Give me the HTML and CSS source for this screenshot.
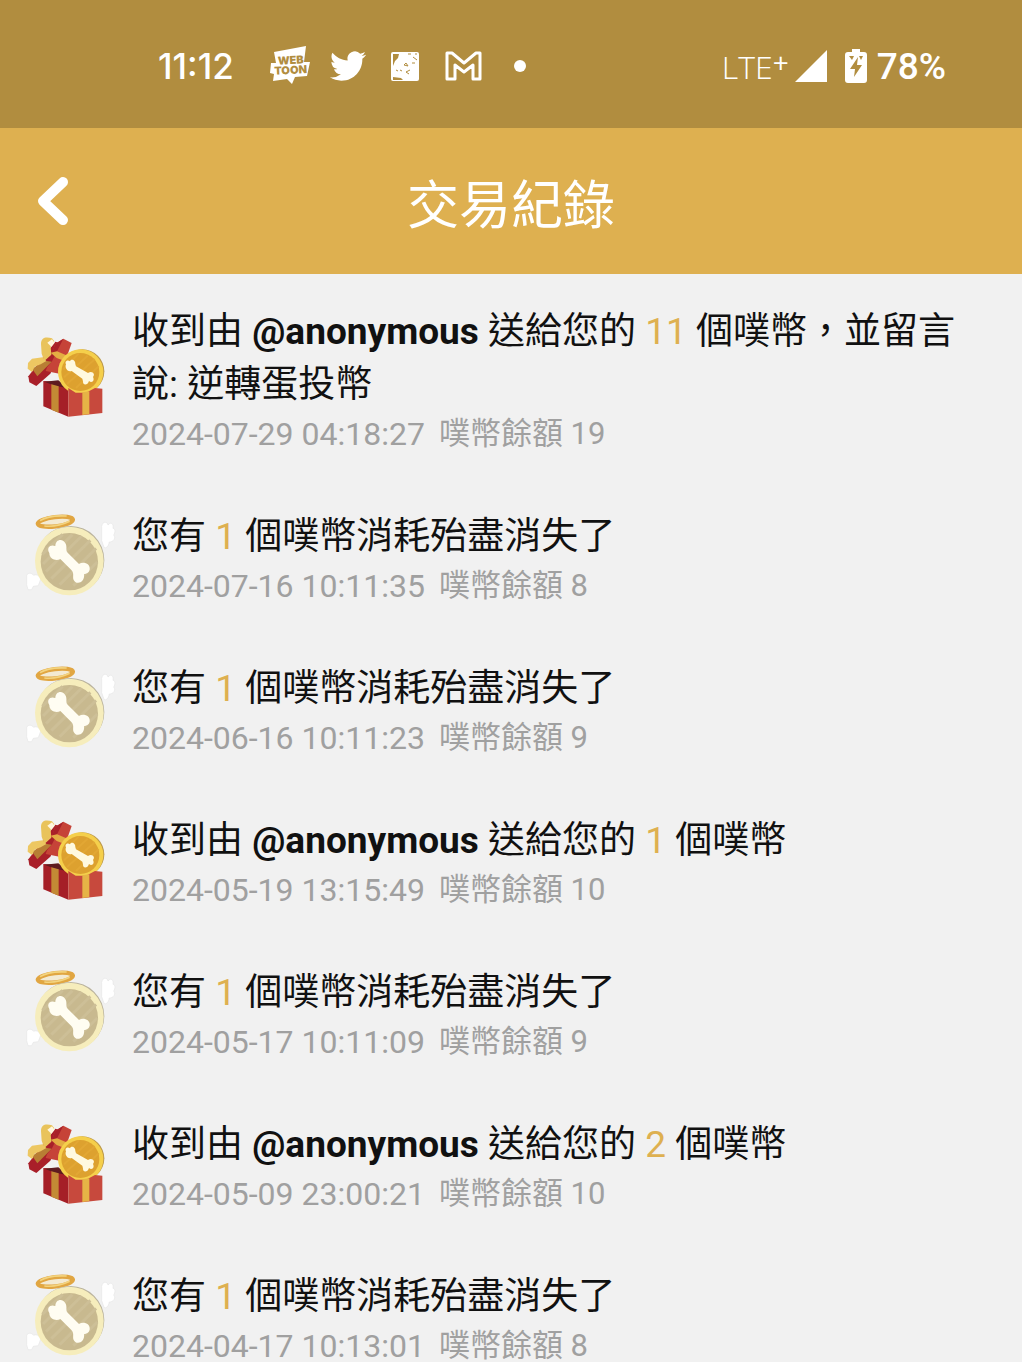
FILE: index.html
```html
<!DOCTYPE html>
<html lang="zh-Hant">
<head>
    <meta charset="UTF-8">
    <meta name="viewport" content="width=device-width, initial-scale=1">
    <title>交易紀錄</title>
    <link rel="stylesheet" href="styles.css">
</head>
<body>
    <svg class="symbols" aria-hidden="true">
        <symbol id="gift" viewBox="27 42 276 276">
            <path d="M85 180L130 182L160 202V287L85 256Z" fill="#a51f27"/>
            <path d="M88 182L130 178L160 202L120 194Z" fill="#5e1b20"/>
            <path d="M109 190L131 196V275L109 266Z" fill="#c38a35"/>
            <path d="M40 166L121 62L146 70L106 158L64 195L43 184Z" fill="#a91f29"/>
            <path d="M121 68L145 53L170 66L137 159L92 150Z" fill="#c64338"/>
            <path d="M91 145L121 69L145 53L111 121Z" fill="#a82129"/>
            <path d="M51 143L91 119L110 122L67 166Z" fill="#b87e34"/>
            <path d="M107 95L126 91L154 103L147 119L125 111Z" fill="#e4ad43"/>
            <path d="M78 69C78 49 93 46 111 52L118 61L107 77L109 101L88 120L80 98Z" fill="#e9c35b"/>
            <path d="M97 65L111 55L119 65L109 77Z" fill="#fff6de"/>
            <path d="M39 126L51 113L83 109L94 120L77 130L59 137L51 153L38 143Z" fill="#edc762"/>
            <circle cx="202" cy="151" r="66" fill="#bc994b"/>
            <circle cx="197" cy="153" r="68" fill="#f5cf4b"/>
            <circle cx="196" cy="153" r="57" fill="#dda12f"/>
            <path d="M145 145L191 98M147 169L218 104M156 189L239 115M183 201L251 136" stroke="#e2a734" stroke-width="6"/>
            <path d="M153 130C148 121 158 115 165 121C169 112 182 117 181 129L183 136L219 156C232 148 242 160 234 168C240 180 230 187 222 180C218 194 203 194 204 181L202 173L170 150C160 155 148 142 153 130Z" fill="#fff9df"/>
            <path d="M160 201L182 215H213L240 201L262 203V276L160 287Z" fill="#c7493d"/>
            <path d="M202 214L223 211V280L202 282Z" fill="#e6b346"/>
        </symbol>
        <symbol id="angel" viewBox="27 40 276 276">
            <g class="wing">
                <path d="M260 120V77C263 62 276 61 279 73C289 61 297 72 294 83C302 84 301 96 296 103C304 114 294 124 283 124C280 139 270 147 266 137Z"/>
                <path d="M35 223C41 215 51 217 56 224C65 219 75 226 77 236L70 255L55 257L50 267L39 267L35 252Z"/>
            </g>
            <ellipse cx="121" cy="63" rx="53" ry="14" fill="#f3ead2" stroke="#e1a642" stroke-width="13" transform="rotate(-7 121 63)"/>
            <path d="M75 60C95 47 123 44 155 46M88 76C118 79 145 71 164 62" fill="none" stroke="#f3d47f" stroke-width="5"/>
            <circle cx="166" cy="178" r="102" fill="#b9b29c"/>
            <circle cx="163" cy="181" r="103" fill="#f6edbc"/>
            <circle cx="163" cy="183" r="86" fill="#c8b98f"/>
            <path d="M82 161L143 101M84 190L172 102M93 213L200 106M109 234L226 119M134 252L243 143M175 255L247 184" stroke="#cdbf97" stroke-width="9"/>
            <path d="M103 157C93 140 107 130 121 136C121 114 145 112 152 129C157 140 151 149 158 156L192 190C206 181 227 190 224 207C222 216 214 219 207 221C210 241 191 253 180 243C168 233 181 219 169 208L136 175C124 182 103 176 103 157Z" fill="#fffdf2"/>
        </symbol>
    </svg>

    <div class="status-bar">
        <div class="status-left">
            <span class="time">11:12</span>
            <svg class="status-icon" viewBox="0 0 40 40" role="img" aria-label="WEBTOON">
                <path d="M4 6L36 0L34 16L40 16L37 30L25 31L22 38L17 33L3 35L4 28L0 27L1 17H6Z" fill="#fff"/>
                <g class="webtoon" transform="rotate(-3 20 20)">
                    <text x="8" y="18">WEB</text>
                    <text x="4" y="28">TOON</text>
                </g>
            </svg>
            <svg class="status-icon twitter" viewBox="0 0 24 24" role="img" aria-label="Twitter">
                <path fill="#fff" d="M23.953 4.57a10 10 0 01-2.825.775 4.958 4.958 0 002.163-2.723c-.951.555-2.005.959-3.127 1.184a4.92 4.92 0 00-8.384 4.482C7.69 8.095 4.067 6.13 1.64 3.162a4.822 4.822 0 00-.666 2.475c0 1.71.87 3.213 2.188 4.096a4.904 4.904 0 01-2.228-.616v.06a4.923 4.923 0 003.946 4.827 4.996 4.996 0 01-2.212.085 4.936 4.936 0 004.604 3.417 9.867 9.867 0 01-6.102 2.105c-.39 0-.779-.023-1.17-.067a13.995 13.995 0 007.557 2.209c9.053 0 13.998-7.496 13.998-13.985 0-.21 0-.42-.015-.63A9.935 9.935 0 0024 4.59z"/>
            </svg>
            <svg class="status-icon" viewBox="0 0 40 40" aria-hidden="true">
                <rect x="5" y="6" width="28" height="29" rx="2" fill="#fff"/>
                <path d="M7 8H13L12 12L9 15L7 20ZM7 31L15 32L17 34H7Z" fill="#b18d3f"/>
                <path d="M18 19L20 17L22 20ZM10 24L12 25M14 24L16 25M24 24L20 26L23 28M22 8H25M27 11L31 14M29 8H31M26 17H29" fill="none" stroke="#b18d3f" stroke-width="1"/>
            </svg>
            <svg class="status-icon" viewBox="0 0 40 40" role="img" aria-label="Gmail">
                <path d="M3 7H8L20 17L32 7H36V33H29V19L20 26L11 19V33H3Z" fill="none" stroke="#fff" stroke-width="3" stroke-linejoin="round"/>
            </svg>
            <span class="dot"></span>
        </div>
        <div class="status-right">
            <span class="network">LTE<span class="plus">+</span></span>
            <svg class="signal" viewBox="0 0 32 32" aria-hidden="true">
                <path d="M32 0V32H0Z" fill="#fff"/>
            </svg>
            <svg class="battery" viewBox="0 0 22 34" aria-hidden="true">
                <path d="M7 0H15V3H19Q22 3 22 6V31Q22 34 19 34H3Q0 34 0 31V6Q0 3 3 3H7Z" fill="#fff"/>
                <path d="M13 8L5 20H10L9 28L17 16H12Z" fill="#b18d3f"/>
                <path d="M4 7H9L7 11ZM14 7H18L16 11Z" fill="#b18d3f"/>
            </svg>
            <span class="percent">78%</span>
        </div>
    </div>

    <header class="header">
        <button class="back" type="button" aria-label="返回">
            <svg viewBox="0 0 30 48" aria-hidden="true">
                <path d="M25 5L5 24L25 43" fill="none" stroke="#fff" stroke-width="10" stroke-linecap="round" stroke-linejoin="round"/>
            </svg>
        </button>
        <h1>交易紀錄</h1>
    </header>

    <ul class="records">
        <li class="record">
            <svg class="record-icon"><use href="#gift"/></svg>
            <div class="record-text">
                <p class="message">收到由 <b>@anonymous</b> 送給您的 <span class="amount">11</span> 個噗幣，並留言說: 逆轉蛋投幣</p>
                <p class="detail"><time>2024-07-29 04:18:27</time><span>噗幣餘額 19</span></p>
            </div>
        </li>
        <li class="record">
            <svg class="record-icon"><use href="#angel"/></svg>
            <div class="record-text">
                <p class="message">您有 <span class="amount">1</span> 個噗幣消耗殆盡消失了</p>
                <p class="detail"><time>2024-07-16 10:11:35</time><span>噗幣餘額 8</span></p>
            </div>
        </li>
        <li class="record">
            <svg class="record-icon"><use href="#angel"/></svg>
            <div class="record-text">
                <p class="message">您有 <span class="amount">1</span> 個噗幣消耗殆盡消失了</p>
                <p class="detail"><time>2024-06-16 10:11:23</time><span>噗幣餘額 9</span></p>
            </div>
        </li>
        <li class="record">
            <svg class="record-icon"><use href="#gift"/></svg>
            <div class="record-text">
                <p class="message">收到由 <b>@anonymous</b> 送給您的 <span class="amount">1</span> 個噗幣</p>
                <p class="detail"><time>2024-05-19 13:15:49</time><span>噗幣餘額 10</span></p>
            </div>
        </li>
        <li class="record">
            <svg class="record-icon"><use href="#angel"/></svg>
            <div class="record-text">
                <p class="message">您有 <span class="amount">1</span> 個噗幣消耗殆盡消失了</p>
                <p class="detail"><time>2024-05-17 10:11:09</time><span>噗幣餘額 9</span></p>
            </div>
        </li>
        <li class="record">
            <svg class="record-icon"><use href="#gift"/></svg>
            <div class="record-text">
                <p class="message">收到由 <b>@anonymous</b> 送給您的 <span class="amount">2</span> 個噗幣</p>
                <p class="detail"><time>2024-05-09 23:00:21</time><span>噗幣餘額 10</span></p>
            </div>
        </li>
        <li class="record">
            <svg class="record-icon"><use href="#angel"/></svg>
            <div class="record-text">
                <p class="message">您有 <span class="amount">1</span> 個噗幣消耗殆盡消失了</p>
                <p class="detail"><time>2024-04-17 10:13:01</time><span>噗幣餘額 8</span></p>
            </div>
        </li>
    </ul>
</body>
</html>
```
FILE: styles.css
```css
* {
    box-sizing: border-box;
}
body {
    display: flex;
    flex-direction: column;
    height: 100vh;
    margin: 0;
    background: #f1f1f1;
    color: #111;
    font-family: Roboto, "Noto Sans CJK TC", sans-serif;
}
.symbols {
    display: none;
}
.status-bar {
    display: flex;
    flex-shrink: 0;
    justify-content: space-between;
    align-items: center;
    height: 128px;
    padding: 4px 76px 0 158px;
    background: #b18d3f;
    color: #fff;
}
.status-left, .status-right {
    display: flex;
    align-items: center;
}
.status-left {
    gap: 18px;
}
.time {
    margin-right: 18px;
    font-family: Inter, sans-serif;
    font-size: 35px;
    font-weight: 500;
}
.status-icon {
    width: 40px;
    height: 40px;
}
.twitter {
    padding: 2px;
}
.webtoon {
    fill: #b18d3f;
    font-family: Inter, sans-serif;
    font-size: 11px;
    font-weight: 900;
}
.dot {
    width: 12px;
    height: 12px;
    margin-left: 12px;
    border-radius: 50%;
    background: #fff;
}
.network {
    font-family: "Open Sans", sans-serif;
    font-size: 32px;
    font-weight: 300;
    line-height: 32px;
    padding-bottom: 4px;
}
.plus {
    font-weight: 400;
    font-size: 28px;
    vertical-align: 6px;
}
.signal {
    width: 32px;
    height: 32px;
    margin-left: 6px;
}
.battery {
    width: 22px;
    height: 34px;
    margin: 0 10px 0 18px;
}
.percent {
    font-size: 37px;
    font-weight: 500;
}
.header {
    display: grid;
    flex-shrink: 0;
    grid-template-columns: 106px 1fr 106px;
    align-items: center;
    height: 146px;
    background: #deb050;
    color: #fff;
}
.header h1 {
    margin: 0;
    font-size: 52px;
    font-weight: 400;
    text-align: center;
}
.back {
    display: flex;
    padding: 0 38px;
    border: 0;
    background: none;
}
.back svg {
    width: 30px;
    height: 48px;
}
.records {
    display: flex;
    flex: 1;
    flex-direction: column;
    gap: 53px;
    min-height: 0;
    margin: 0;
    padding: 31px 24px;
    overflow-y: auto;
    scrollbar-width: none;
    list-style: none;
}
.record {
    display: flex;
    flex-shrink: 0;
    align-items: center;
    gap: 16px;
}
.record-icon {
    flex-shrink: 0;
    width: 92px;
    height: 92px;
}
.wing {
    fill: #fff;
    stroke: #e6e6e6;
    stroke-width: 2;
}
.message, .detail {
    margin: 0;
}
.message {
    font-size: 37px;
    line-height: 53px;
}
.amount {
    color: #deb050;
}
.detail {
    display: flex;
    gap: 14px;
    color: #a0a0a0;
    font-size: 31px;
    line-height: 46px;
}
.detail time {
    font-size: 32px;
}
```
